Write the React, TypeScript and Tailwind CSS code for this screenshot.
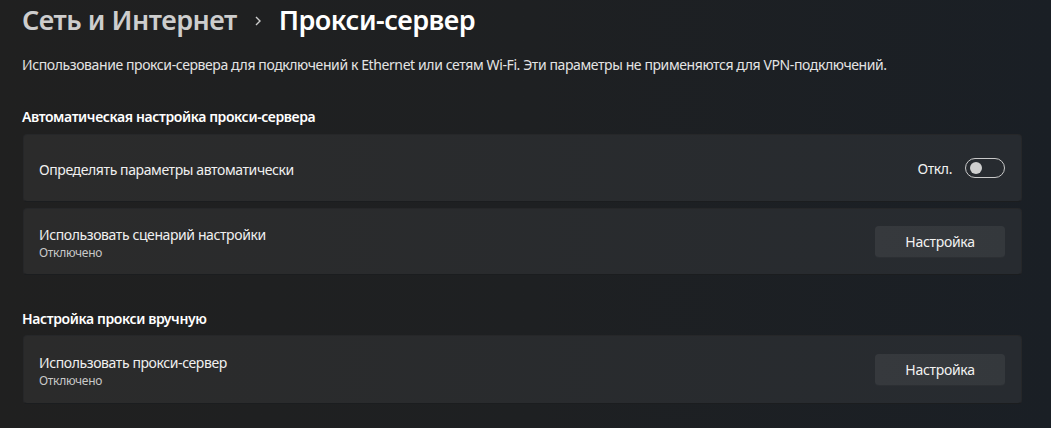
import React from "react";

const font = { fontFamily: '"Segoe UI", "Noto Sans", "Open Sans", sans-serif' };

function Toggle() {
  return (
    <div className="flex items-center gap-[13px]">
      <span className="text-[14px] tracking-[-0.4px] text-[#f2f2f2]">Откл.</span>
      <div className="w-[40px] h-[20px] rounded-full border border-[#c9c9c9] flex items-center px-[4px]">
        <div className="w-[12px] h-[12px] rounded-full bg-[#cfcfcf]" />
      </div>
    </div>
  );
}

function SetupButton() {
  return (
    <button className="w-[130px] h-[32px] rounded-[4px] bg-gradient-to-r from-[#36393d] to-[#34383c] border-b border-[#2c2f33] text-[14px] tracking-[-0.3px] text-[#f2f2f2]">
      Настройка
    </button>
  );
}

function Row({
  title,
  sub,
  right,
  h,
}: {
  title: string;
  sub?: string;
  right: React.ReactNode;
  h: string;
}) {
  return (
    <div
      className={`${h} rounded-[4px] bg-gradient-to-r from-[#2b2b2b] to-[#272b30] border border-[#262729] border-b-[#1b1d1f] flex items-center justify-between pl-[15px] pr-[16px]`}
    >
      <div className="flex flex-col pt-[2px]">
        <span className="text-[14px] leading-[19px] tracking-[-0.4px] text-[#f0f0f0]">{title}</span>
        {sub && <span className="text-[12px] leading-[17px] tracking-[-0.3px] text-[#c8c8c8]">{sub}</span>}
      </div>
      {right}
    </div>
  );
}

export default function App() {
  return (
    <div
      style={font}
      className="w-[1051px] h-[428px] overflow-hidden bg-gradient-to-r from-[#202020] via-[#1e2022] to-[#1a1f25] pl-[22px] pr-[29px]"
    >
      <div className="h-[40px] flex items-center gap-[15px] text-[27px] tracking-[-0.5px] font-semibold">
        <span className="text-[#cdcdcd]">Сеть и Интернет</span>
        <svg width="12" height="12" viewBox="0 0 12 12" className="mt-[2px]">
          <path d="M4 2 L8 6 L4 10" fill="none" stroke="#cdcdcd" strokeWidth="1.4" />
        </svg>
        <span className="text-white">Прокси-сервер</span>
      </div>
      <p className="mt-[15px] text-[14px] leading-[20px] tracking-[-0.4px] text-[#e4e4e4]">
        Использование прокси-сервера для подключений к Ethernet или сетям Wi-Fi. Эти параметры не применяются для VPN-подключений.
      </p>
      <h2 className="mt-[32px] text-[14px] leading-[20px] tracking-[-0.4px] font-semibold text-white">
        Автоматическая настройка прокси-сервера
      </h2>
      <div className="mt-[7px] pl-[1px] flex flex-col gap-[6px]">
        <Row h="h-[68px]" title="Определять параметры автоматически" right={<Toggle />} />
        <Row h="h-[67px]" title="Использовать сценарий настройки" sub="Отключено" right={<SetupButton />} />
      </div>
      <h2 className="mt-[34px] text-[14px] leading-[20px] tracking-[-0.4px] font-semibold text-white">
        Настройка прокси вручную
      </h2>
      <div className="mt-[6px] pl-[1px]">
        <Row h="h-[69px]" title="Использовать прокси-сервер" sub="Отключено" right={<SetupButton />} />
      </div>
    </div>
  );
}
